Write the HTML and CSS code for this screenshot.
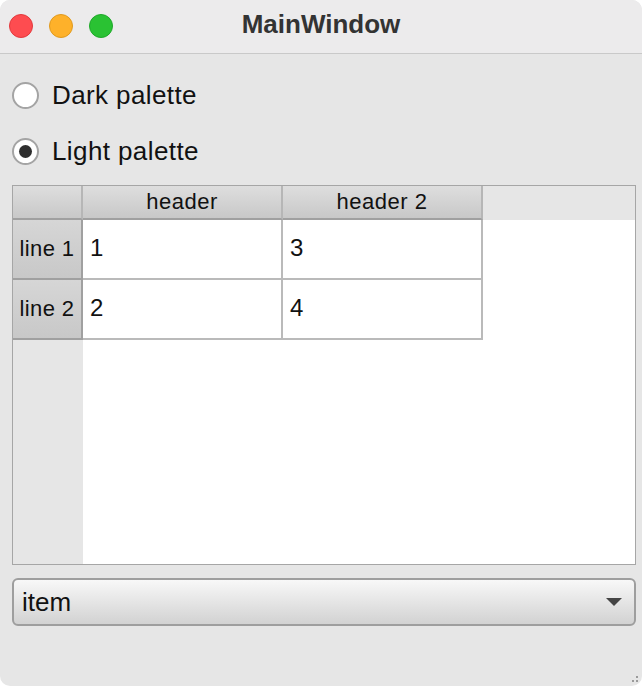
FILE: index.html
```html
<!DOCTYPE html>
<html lang="en">
<head>
    <meta charset="UTF-8">
    <meta name="viewport" content="width=device-width, initial-scale=1.0">
    <title>MainWindow</title>
    <link rel="stylesheet" href="styles.css">
</head>
<body>

    <div class="window">
        <div class="titlebar">
            <div class="lights">
                <span class="light red"></span>
                <span class="light yellow"></span>
                <span class="light green"></span>
            </div>
            <div class="title">MainWindow</div>
        </div>

        <div class="content">
            <label class="radio">
                <span class="circle"></span>
                <span class="radio-text">Dark palette</span>
            </label>
            <label class="radio checked">
                <span class="circle"></span>
                <span class="radio-text">Light palette</span>
            </label>

            <div class="table">
                <div class="thead">
                    <div class="corner"></div>
                    <div class="hcell">header</div>
                    <div class="hcell">header 2</div>
                </div>
                <div class="row">
                    <div class="rhead">line 1</div>
                    <div class="cell">1</div>
                    <div class="cell">3</div>
                </div>
                <div class="row">
                    <div class="rhead">line 2</div>
                    <div class="cell">2</div>
                    <div class="cell">4</div>
                </div>
            </div>

            <div class="combo">
                <span class="combo-text">item</span>
                <span class="arrow"></span>
            </div>
        </div>

        <div class="grip"></div>
    </div>

</body>
</html>
```

FILE: styles.css
```css
body {
    margin: 0;
    padding: 0;
    background-color: #ffffff;
    font-family: "Liberation Sans", Arial, sans-serif;
}

.window {
    position: relative;
    width: 642px;
    height: 686px;
    background-color: #e6e6e6;
    border-radius: 10px;
    overflow: hidden;
}

.titlebar {
    position: relative;
    height: 53px;
    background-color: #ecebec;
    border-bottom: 1px solid #c9c9c9;
}

.lights {
    display: flex;
    gap: 16px;
    padding: 14px 0 0 9px;
}

.light {
    width: 24px;
    height: 24px;
    border-radius: 50%;
    box-sizing: border-box;
}

.red {
    background-color: #fe4c50;
    border: 1px solid #e2393d;
}

.yellow {
    background-color: #feb12a;
    border: 1px solid #e09a1f;
}

.green {
    background-color: #2ac233;
    border: 1px solid #1fa82a;
}

.title {
    position: absolute;
    top: 9px;
    left: 0;
    right: 0;
    text-align: center;
    font-weight: bold;
    font-size: 26px;
    color: #333333;
}

.content {
    padding: 27px 6px 0 12px;
}

.radio {
    display: flex;
    align-items: center;
    height: 28px;
    margin-bottom: 28px;
    font-size: 26px;
    letter-spacing: 0.4px;
    color: #111111;
}

.radio:nth-child(2) {
    margin-bottom: 20px;
}

.circle {
    position: relative;
    width: 27px;
    height: 27px;
    box-sizing: border-box;
    border: 2px solid #a4a4a4;
    border-radius: 50%;
    background-color: #ffffff;
    margin-right: 13px;
}

.checked .circle::after {
    content: "";
    position: absolute;
    left: 5px;
    top: 5px;
    width: 13px;
    height: 13px;
    border-radius: 50%;
    background-color: #2e2e2e;
}

.table {
    height: 380px;
    box-sizing: border-box;
    border: 1px solid #a6a6a6;
    background: linear-gradient(to right, #e6e6e6 70px, #ffffff 70px);
    font-size: 22px;
    color: #111111;
}

.thead {
    display: flex;
    height: 34px;
    background-color: #e6e6e6;
}

.corner,
.hcell {
    box-sizing: border-box;
    background: linear-gradient(#dedede, #c8c8c8);
    border-bottom: 2px solid #a0a0a0;
    border-right: 2px solid #b6b6b6;
}

.corner {
    width: 70px;
}

.hcell {
    width: 200px;
    text-align: center;
    line-height: 32px;
    letter-spacing: 0.5px;
}

.row {
    display: flex;
    height: 60px;
}

.rhead {
    width: 70px;
    box-sizing: border-box;
    background: linear-gradient(#d6d6d6, #c8c8c8);
    border-right: 2px solid #a0a0a0;
    border-bottom: 2px solid #a0a0a0;
    text-align: center;
    line-height: 58px;
    letter-spacing: 0.4px;
}

.cell {
    width: 200px;
    box-sizing: border-box;
    background-color: #ffffff;
    border-right: 2px solid #bababa;
    border-bottom: 2px solid #bababa;
    padding-left: 7px;
    font-size: 24px;
    line-height: 56px;
}

.combo {
    display: flex;
    align-items: center;
    justify-content: space-between;
    margin-top: 13px;
    height: 48px;
    box-sizing: border-box;
    border: 2px solid #9e9e9e;
    border-radius: 6px;
    background: linear-gradient(#f8f8f8, #d2d2d2);
    padding: 0 12px 0 8px;
}

.combo-text {
    font-size: 26px;
    color: #111111;
}

.arrow {
    width: 0;
    height: 0;
    border-left: 8px solid transparent;
    border-right: 8px solid transparent;
    border-top: 8px solid #444444;
}

.grip {
    position: absolute;
    right: 4px;
    bottom: 4px;
    width: 6px;
    height: 6px;
    background:
        radial-gradient(circle, #9a9a9a 1px, transparent 1px) 4px 0 / 2px 2px no-repeat,
        radial-gradient(circle, #9a9a9a 1px, transparent 1px) 4px 4px / 2px 2px no-repeat,
        radial-gradient(circle, #9a9a9a 1px, transparent 1px) 0 4px / 2px 2px no-repeat;
}
```
